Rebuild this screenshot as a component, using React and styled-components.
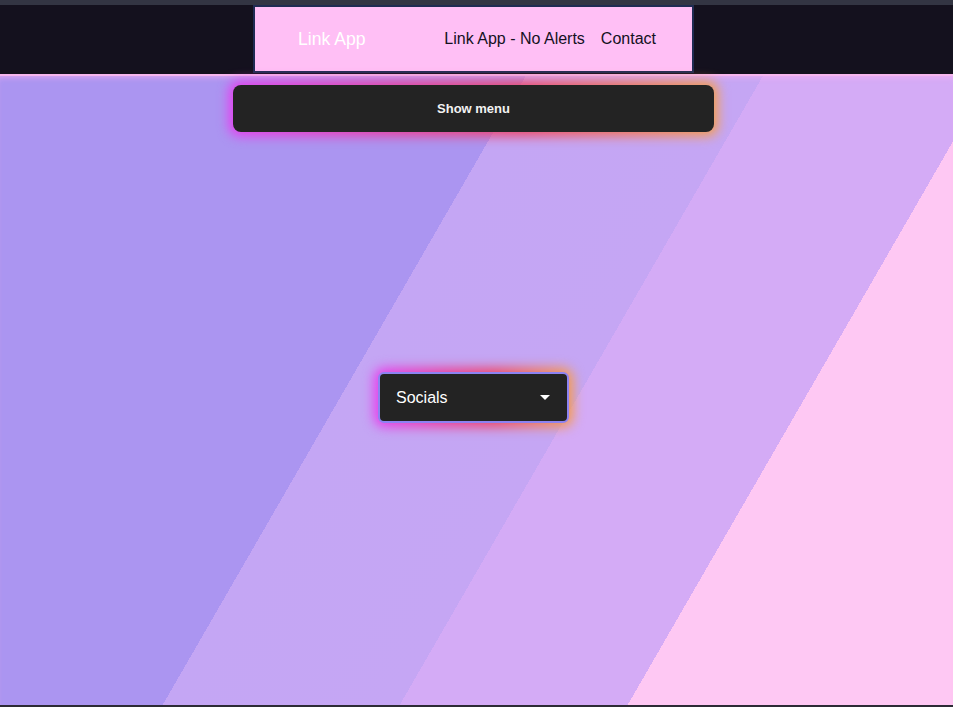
import React, { useState } from "react";
import styled, { createGlobalStyle } from "styled-components";

const GlobalStyle = createGlobalStyle`
  html, body {
    margin: 0;
    padding: 0;
    height: 100%;
    background: #14111e;
    font-family: "Liberation Sans", Arial, sans-serif;
  }
  #root {
    height: 100%;
  }
`

const Page = styled.div`
  display: flex;
  flex-direction: column;
  width: 953px;
  height: 707px;
  overflow: hidden;
`

const TopStrip = styled.div`
  height: 5px;
  background: #333543;
`

const Header = styled.header`
  display: flex;
  justify-content: center;
  padding-right: 6px;
  height: 69px;
  background: #14111e;
`

const NavBox = styled.nav`
  display: flex;
  align-items: center;
  box-sizing: border-box;
  width: 441px;
  height: 68px;
  padding: 0 36px 0 43px;
  background: #ffbff5;
  border: 2px solid #1f2b52;
`

const Logo = styled.a`
  color: #ffffff;
  font-size: 17.6px;
  text-decoration: none;
  margin-right: auto;
`

const NavLinks = styled.div`
  display: flex;
  gap: 16px;
`

const NavLink = styled.a`
  color: #14111e;
  font-size: 16px;
  text-decoration: none;
`

const Main = styled.main`
  position: relative;
  z-index: 0;
  flex: 1;
  display: flex;
  flex-direction: column;
  align-items: center;
  padding-right: 6px;
  background: linear-gradient(
    120deg,
    #ab95f1 0%,
    #ab95f1 40%,
    #c4a6f4 40%,
    #c5a6f4 58%,
    #d4abf6 58%,
    #d4abf6 75.3%,
    #fec8f3 75.3%,
    #fec8f3 100%
  );
  box-shadow: inset 0 2px 0 #f6b6ee, inset 0 7px 6px -4px rgba(250, 175, 240, 0.75);
`

const Glow = styled.div`
  position: relative;
  margin-top: ${p => p.$top}px;

  &::before {
    content: "";
    position: absolute;
    inset: -4px;
    border-radius: 10px;
    background: linear-gradient(90deg, #e63cf3 0%, #ec3c9a 35%, #f04464 60%, #f5a047 100%);
    filter: blur(6px);
    z-index: -1;
  }
`

const MenuButton = styled.button`
  display: block;
  width: 481px;
  height: 47px;
  border: none;
  border-radius: 8px;
  background: #232323;
  color: #f2f2f2;
  font-family: "Liberation Sans", Arial, sans-serif;
  font-size: 13px;
  font-weight: 700;
  cursor: pointer;
`

const Select = styled.div`
  display: flex;
  align-items: center;
  justify-content: space-between;
  box-sizing: border-box;
  width: 191px;
  height: 51px;
  padding: 0 17px 0 16px;
  border: 2px solid #8d82f2;
  border-radius: 6px;
  background: #232323;
  color: #ffffff;
  font-size: 16px;
  cursor: pointer;
`

const Caret = styled.span`
  width: 0;
  height: 0;
  border-left: 5px solid transparent;
  border-right: 5px solid transparent;
  border-top: 5px solid #ffffff;
`

const BottomStrip = styled.div`
  height: 2px;
  background: #2d2b36;
`

export default function App() {
  const [open, setOpen] = useState(false)

  return (
    <Page>
      <GlobalStyle />
      <TopStrip />
      <Header>
        <NavBox>
          <Logo href="#">Link App</Logo>
          <NavLinks>
            <NavLink href="#">Link App - No Alerts</NavLink>
            <NavLink href="#">Contact</NavLink>
          </NavLinks>
        </NavBox>
      </Header>
      <Main>
        <Glow $top={11}>
          <MenuButton onClick={() => setOpen(!open)}>
            {open ? "Hide menu" : "Show menu"}
          </MenuButton>
        </Glow>
        <Glow $top={240}>
          <Select>
            Socials
            <Caret />
          </Select>
        </Glow>
      </Main>
      <BottomStrip />
    </Page>
  )
}
